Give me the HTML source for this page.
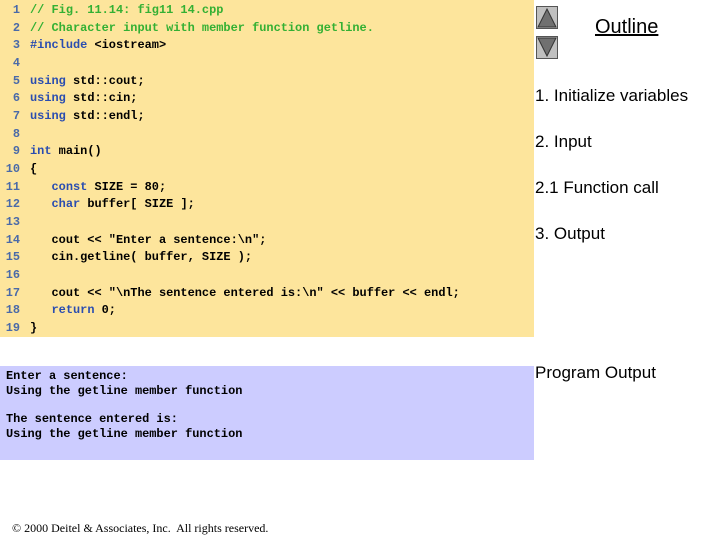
<!DOCTYPE html>
<html><head><meta charset="utf-8"><style>
body{margin:0;width:720px;height:540px;background:#fff;position:relative;overflow:hidden;font-family:"Liberation Sans",sans-serif}
.code{position:absolute;left:0;top:0;width:534px;height:337px;background:#fde59c}
.out{position:absolute;left:0;top:366px;width:534px;height:94px;background:#ccccff}
.l{position:absolute;font-family:"Liberation Mono",monospace;font-size:11.95px;font-weight:bold;white-space:pre;line-height:14px;color:#000}
.n{position:absolute;font-family:"Liberation Mono",monospace;font-size:11.9px;font-weight:bold;color:#4a6aa8;width:20px;text-align:right;left:0;line-height:14px}
.c{color:#33b033}.k{color:#2a4db0}
.r{position:absolute;left:535px;font-size:17px;color:#000}
.btn{position:absolute;left:536px;width:22px;height:23px;background:#c0c0c0;border:1px solid #555;box-sizing:border-box}
</style></head><body>
<div class="code"></div>
<div class="out"></div>

<div class="n" style="top:3px">1</div><div class="l" style="left:30px;top:3px"><span class="c">// Fig. 11.14: fig11 14.cpp</span></div>
<div class="n" style="top:21px">2</div><div class="l" style="left:30px;top:21px"><span class="c">// Character input with member function getline.</span></div>
<div class="n" style="top:38px">3</div><div class="l" style="left:30px;top:38px"><span class="k">#include</span> &lt;iostream&gt;</div>
<div class="n" style="top:56px">4</div>
<div class="n" style="top:74px">5</div><div class="l" style="left:30px;top:74px"><span class="k">using</span> std::cout;</div>
<div class="n" style="top:91px">6</div><div class="l" style="left:30px;top:91px"><span class="k">using</span> std::cin;</div>
<div class="n" style="top:109px">7</div><div class="l" style="left:30px;top:109px"><span class="k">using</span> std::endl;</div>
<div class="n" style="top:127px">8</div>
<div class="n" style="top:144px">9</div><div class="l" style="left:30px;top:144px"><span class="k">int</span> main()</div>
<div class="n" style="top:162px">10</div><div class="l" style="left:30px;top:162px">{</div>
<div class="n" style="top:180px">11</div><div class="l" style="left:30px;top:180px">   <span class="k">const</span> SIZE = 80;</div>
<div class="n" style="top:197px">12</div><div class="l" style="left:30px;top:197px">   <span class="k">char</span> buffer[ SIZE ];</div>
<div class="n" style="top:215px">13</div>
<div class="n" style="top:233px">14</div><div class="l" style="left:30px;top:233px">   cout &lt;&lt; "Enter a sentence:\n";</div>
<div class="n" style="top:250px">15</div><div class="l" style="left:30px;top:250px">   cin.getline( buffer, SIZE );</div>
<div class="n" style="top:268px">16</div>
<div class="n" style="top:286px">17</div><div class="l" style="left:30px;top:286px">   cout &lt;&lt; "\nThe sentence entered is:\n" &lt;&lt; buffer &lt;&lt; endl;</div>
<div class="n" style="top:303px">18</div><div class="l" style="left:30px;top:303px">   <span class="k">return</span> 0;</div>
<div class="n" style="top:321px">19</div><div class="l" style="left:30px;top:321px">}</div>

<div class="l" style="left:6px;top:369px">Enter a sentence:</div>
<div class="l" style="left:6px;top:384px">Using the getline member function</div>
<div class="l" style="left:6px;top:412px">The sentence entered is:</div>
<div class="l" style="left:6px;top:427px">Using the getline member function</div>

<div class="btn" style="top:6px"><svg width="20" height="21" style="position:absolute;left:0;top:0"><polygon points="10,2 19,20 1,20" fill="#707070" stroke="#333" stroke-width="1"/></svg></div>
<div class="btn" style="top:36px"><svg width="20" height="21" style="position:absolute;left:0;top:0"><polygon points="1,1 19,1 10,19" fill="#707070" stroke="#333" stroke-width="1"/></svg></div>
<div style="position:absolute;left:595px;top:16px;font-size:20px;text-decoration:underline">Outline</div>
<div class="r" style="top:86px">1. Initialize variables</div>
<div class="r" style="top:132px">2. Input</div>
<div class="r" style="top:178px">2.1 Function call</div>
<div class="r" style="top:224px">3. Output</div>
<div class="r" style="top:363px">Program Output</div>
<div style="position:absolute;left:12px;top:521px;font-family:'Liberation Serif',serif;font-size:12px">© 2000 Deitel &amp; Associates, Inc.&nbsp; All rights reserved.</div>
</body></html>
